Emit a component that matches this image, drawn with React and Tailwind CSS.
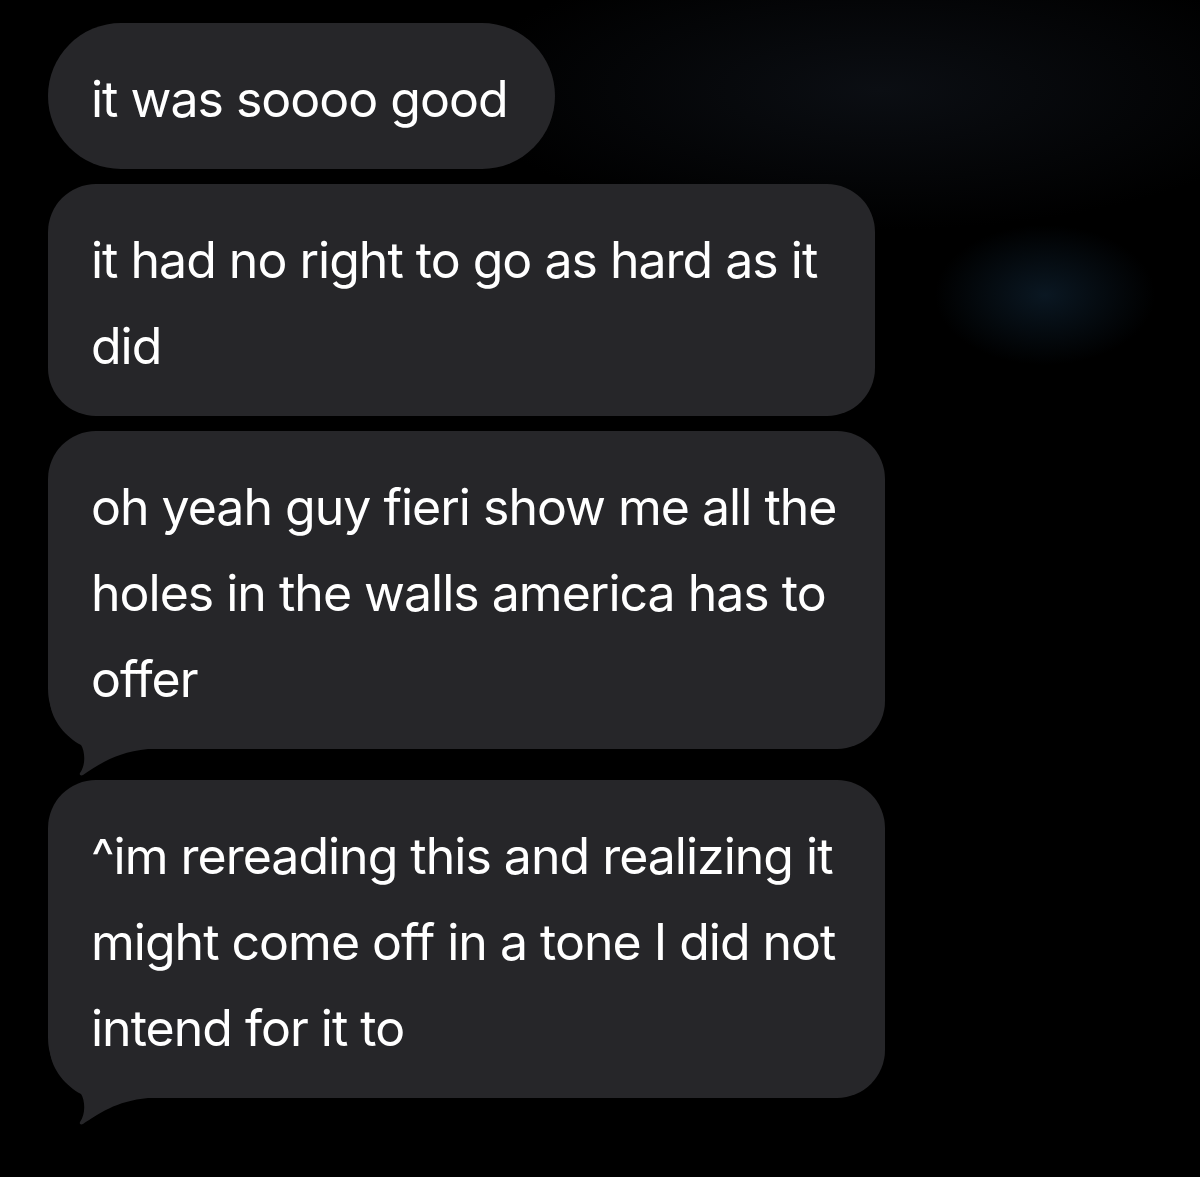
import React from 'react';

const messages = [
    { text: "it was soooo good", width: "w-[507px]", radius: "rounded-[73px]", gap: "mt-0", tail: false },
    { text: "it had no right to go as hard as it did", width: "w-[827px]", radius: "rounded-[48px]", gap: "mt-[15px]", tail: false },
    { text: "oh yeah guy fieri show me all the holes in the walls america has to offer", width: "w-[837px]", radius: "rounded-[48px] rounded-bl-[60px]", gap: "mt-[15px]", tail: true },
    { text: "^im rereading this and realizing it might come off in a tone I did not intend for it to", width: "w-[837px]", radius: "rounded-[48px] rounded-bl-[60px]", gap: "mt-[31px]", tail: true },
];

function Tail() {
    // tail hangs off the bottom-left corner of a received bubble
    return (
        <svg
            className="absolute left-0 -bottom-[30px] pointer-events-none"
            width="100"
            height="80"
            viewBox="0 -50 100 80"
        >
            <path
                d="M2 -46 C4 -28 18 -12 33 -4 C37 2 38 16 32 24 C31 26 33 27 35 26 C50 16 68 3 100 0 L100 -46 Z"
                fill="#262629"
            />
        </svg>
    );
}

export default function App() {
    return (
        <div className="w-[1200px] h-[1177px] overflow-hidden bg-black bg-[radial-gradient(ellipse_110px_70px_at_1045px_295px,#0a1722_0%,transparent_100%),radial-gradient(ellipse_420px_140px_at_880px_90px,#0b0e13_0%,transparent_100%)]">
            <div className="flex flex-col pl-[48px] pt-[23px]" style={{ fontFamily: "Inter, 'Open Sans', sans-serif" }}>
                {messages.map((m, i) => (
                    <div
                        key={i}
                        className={`relative ${m.gap} ${m.width} ${m.radius} bg-[#262629] pl-[43px] pr-[30px] pt-[33px] pb-[27px]`}
                    >
                        {m.tail && <Tail />}
                        <p className="relative text-[50px] leading-[86px] text-white tracking-[-0.02em]">{m.text}</p>
                    </div>
                ))}
            </div>
        </div>
    );
}
